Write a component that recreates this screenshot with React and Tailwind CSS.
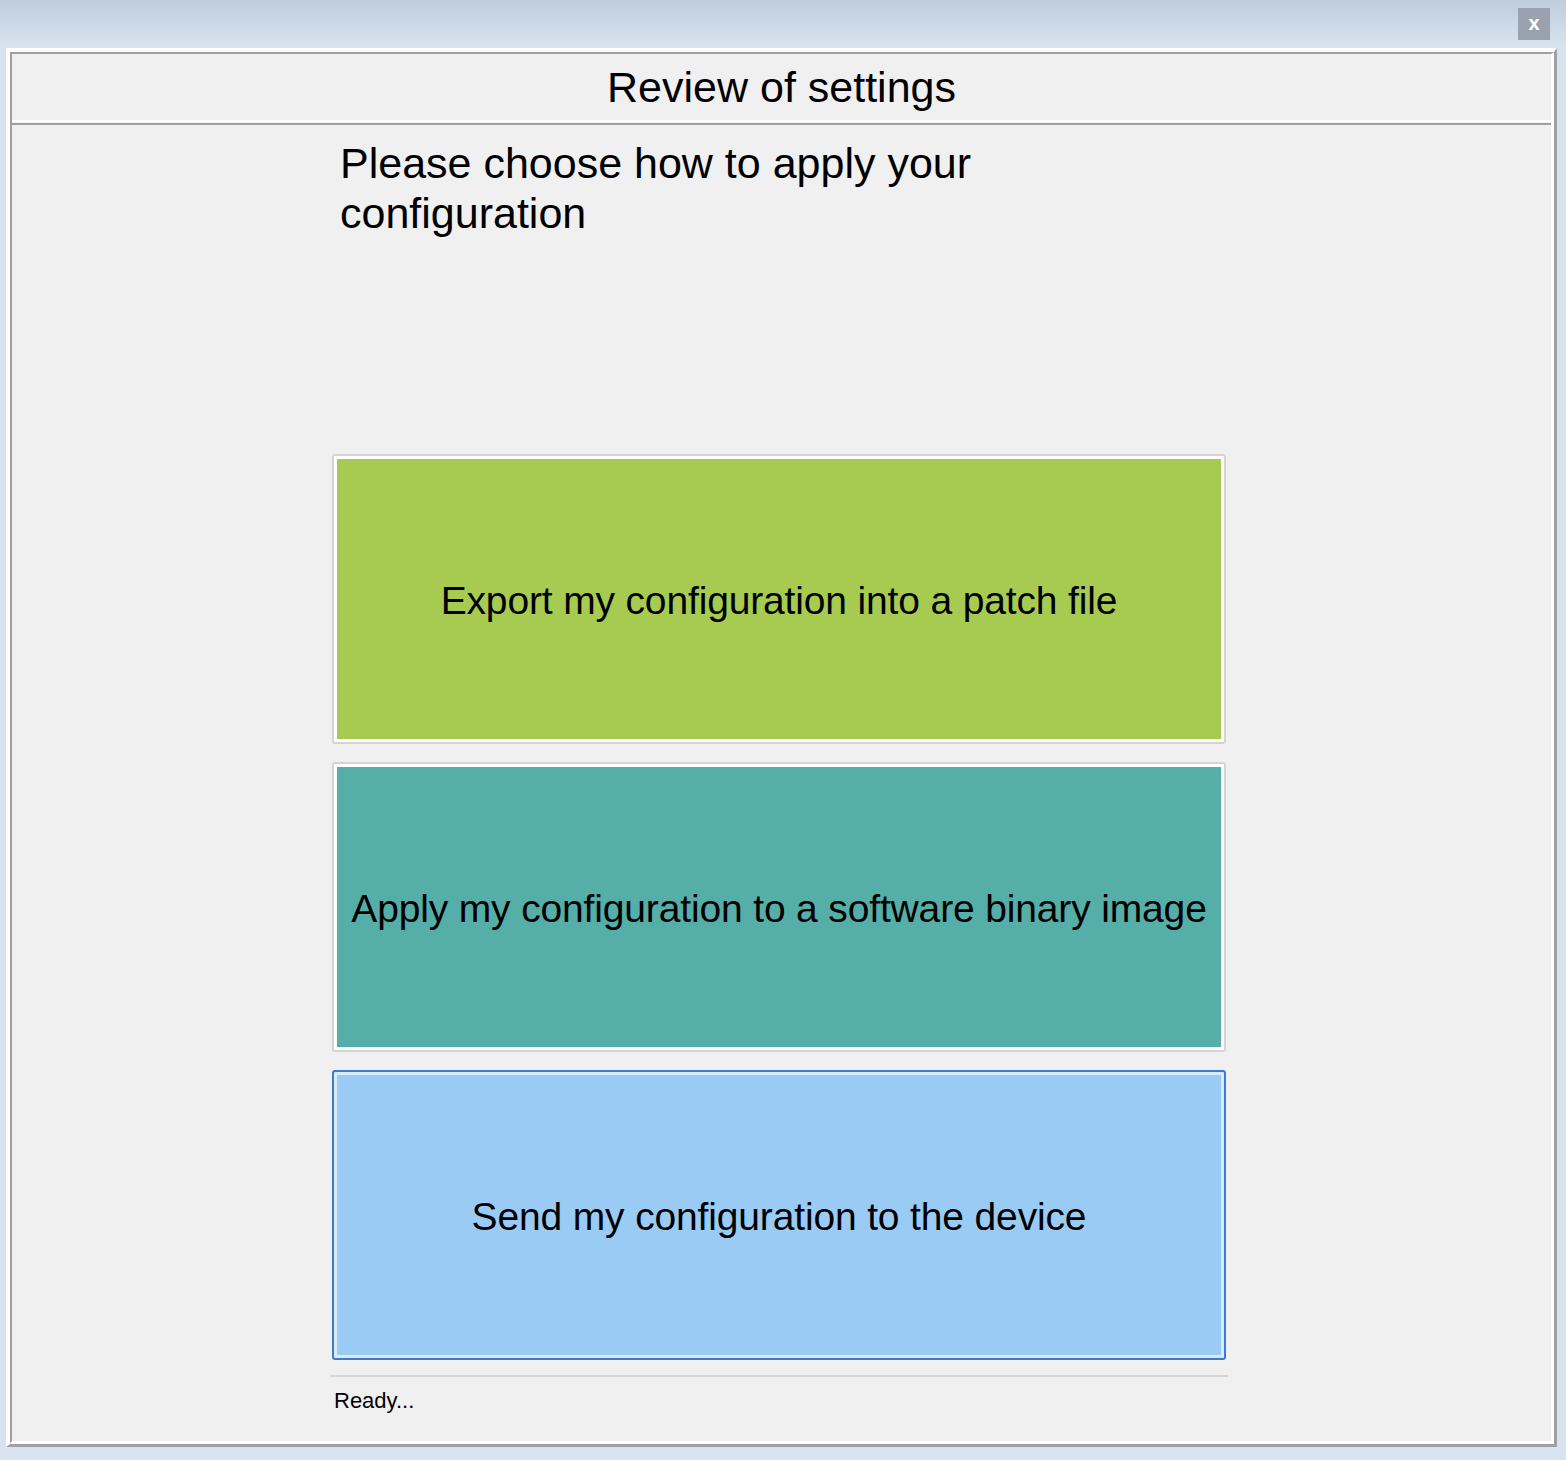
import React from 'react';

const options = [
  {
    label: 'Export my configuration into a patch file',
    frame: 'border-[#d4d4d4] bg-white',
    fill: 'bg-[#a6cb50]',
  },
  {
    label: 'Apply my configuration to a software binary image',
    frame: 'border-[#d4d4d4] bg-white',
    fill: 'bg-[#55aea8]',
  },
  {
    label: 'Send my configuration to the device',
    frame: 'border-[#3a7bd0] bg-[#d8eafb]',
    fill: 'bg-[#99cbf5]',
  },
];

const App = () => {
  return (
    <div className="w-[1566px] h-[1460px] bg-[#d9e3ef] flex flex-col font-['Liberation_Sans',Arial,sans-serif] text-black">
      {/* Title bar */}
      <div className="h-[48px] bg-gradient-to-b from-[#bfcedd] to-[#d8e3ef] flex justify-end items-start pt-[8px] pr-[16px]">
        <button className="w-[32px] h-[32px] bg-[#9aa3ad] flex items-center justify-center text-white font-bold text-[20px] leading-none pb-[3px]">
          x
        </button>
      </div>

      {/* Window frame */}
      <div className="ml-[6px] w-[1551px] h-[1399px] flex border-t-4 border-l-4 border-white border-r-[3px] border-b-[3px] border-r-[#a0a0a0] border-b-[#a0a0a0]">
        <div className="flex-1 flex flex-col bg-[#f0f0f0] border-t-2 border-l-2 border-[#a0a0a0] border-r-[3px] border-b-[3px] border-r-white border-b-white">
          {/* Header */}
          <div className="h-[66px] flex items-center justify-center text-[43px] leading-[50px]">
            Review of settings
          </div>
          <div className="h-[5px] border-t-2 border-white border-b-2 border-b-[#a0a0a0]" />

          {/* Content column */}
          <div className="w-[894px] ml-[320px] flex flex-col">
            <div className="h-[329px] pt-[13px] pl-[8px]">
              <p className="w-[680px] text-[43px] leading-[50px]">
                Please choose how to apply your configuration
              </p>
            </div>

            <div className="flex flex-col gap-[18px]">
              {options.map((opt) => (
                <button
                  key={opt.label}
                  className={`h-[290px] rounded-[3px] border-2 p-[3px] flex ${opt.frame}`}
                >
                  <div
                    className={`flex-1 flex items-center justify-center pt-[2px] text-[39px] tracking-[-0.15px] leading-none ${opt.fill}`}
                  >
                    {opt.label}
                  </div>
                </button>
              ))}
            </div>

            <div className="mt-[15px] h-[2px] bg-[#d6d6d6] -mx-[2px]" />
            <div className="mt-[12px] pl-[2px] text-[22px] leading-[24px]">
              Ready...
            </div>
          </div>
        </div>
      </div>
    </div>
  );
};

export default App;
